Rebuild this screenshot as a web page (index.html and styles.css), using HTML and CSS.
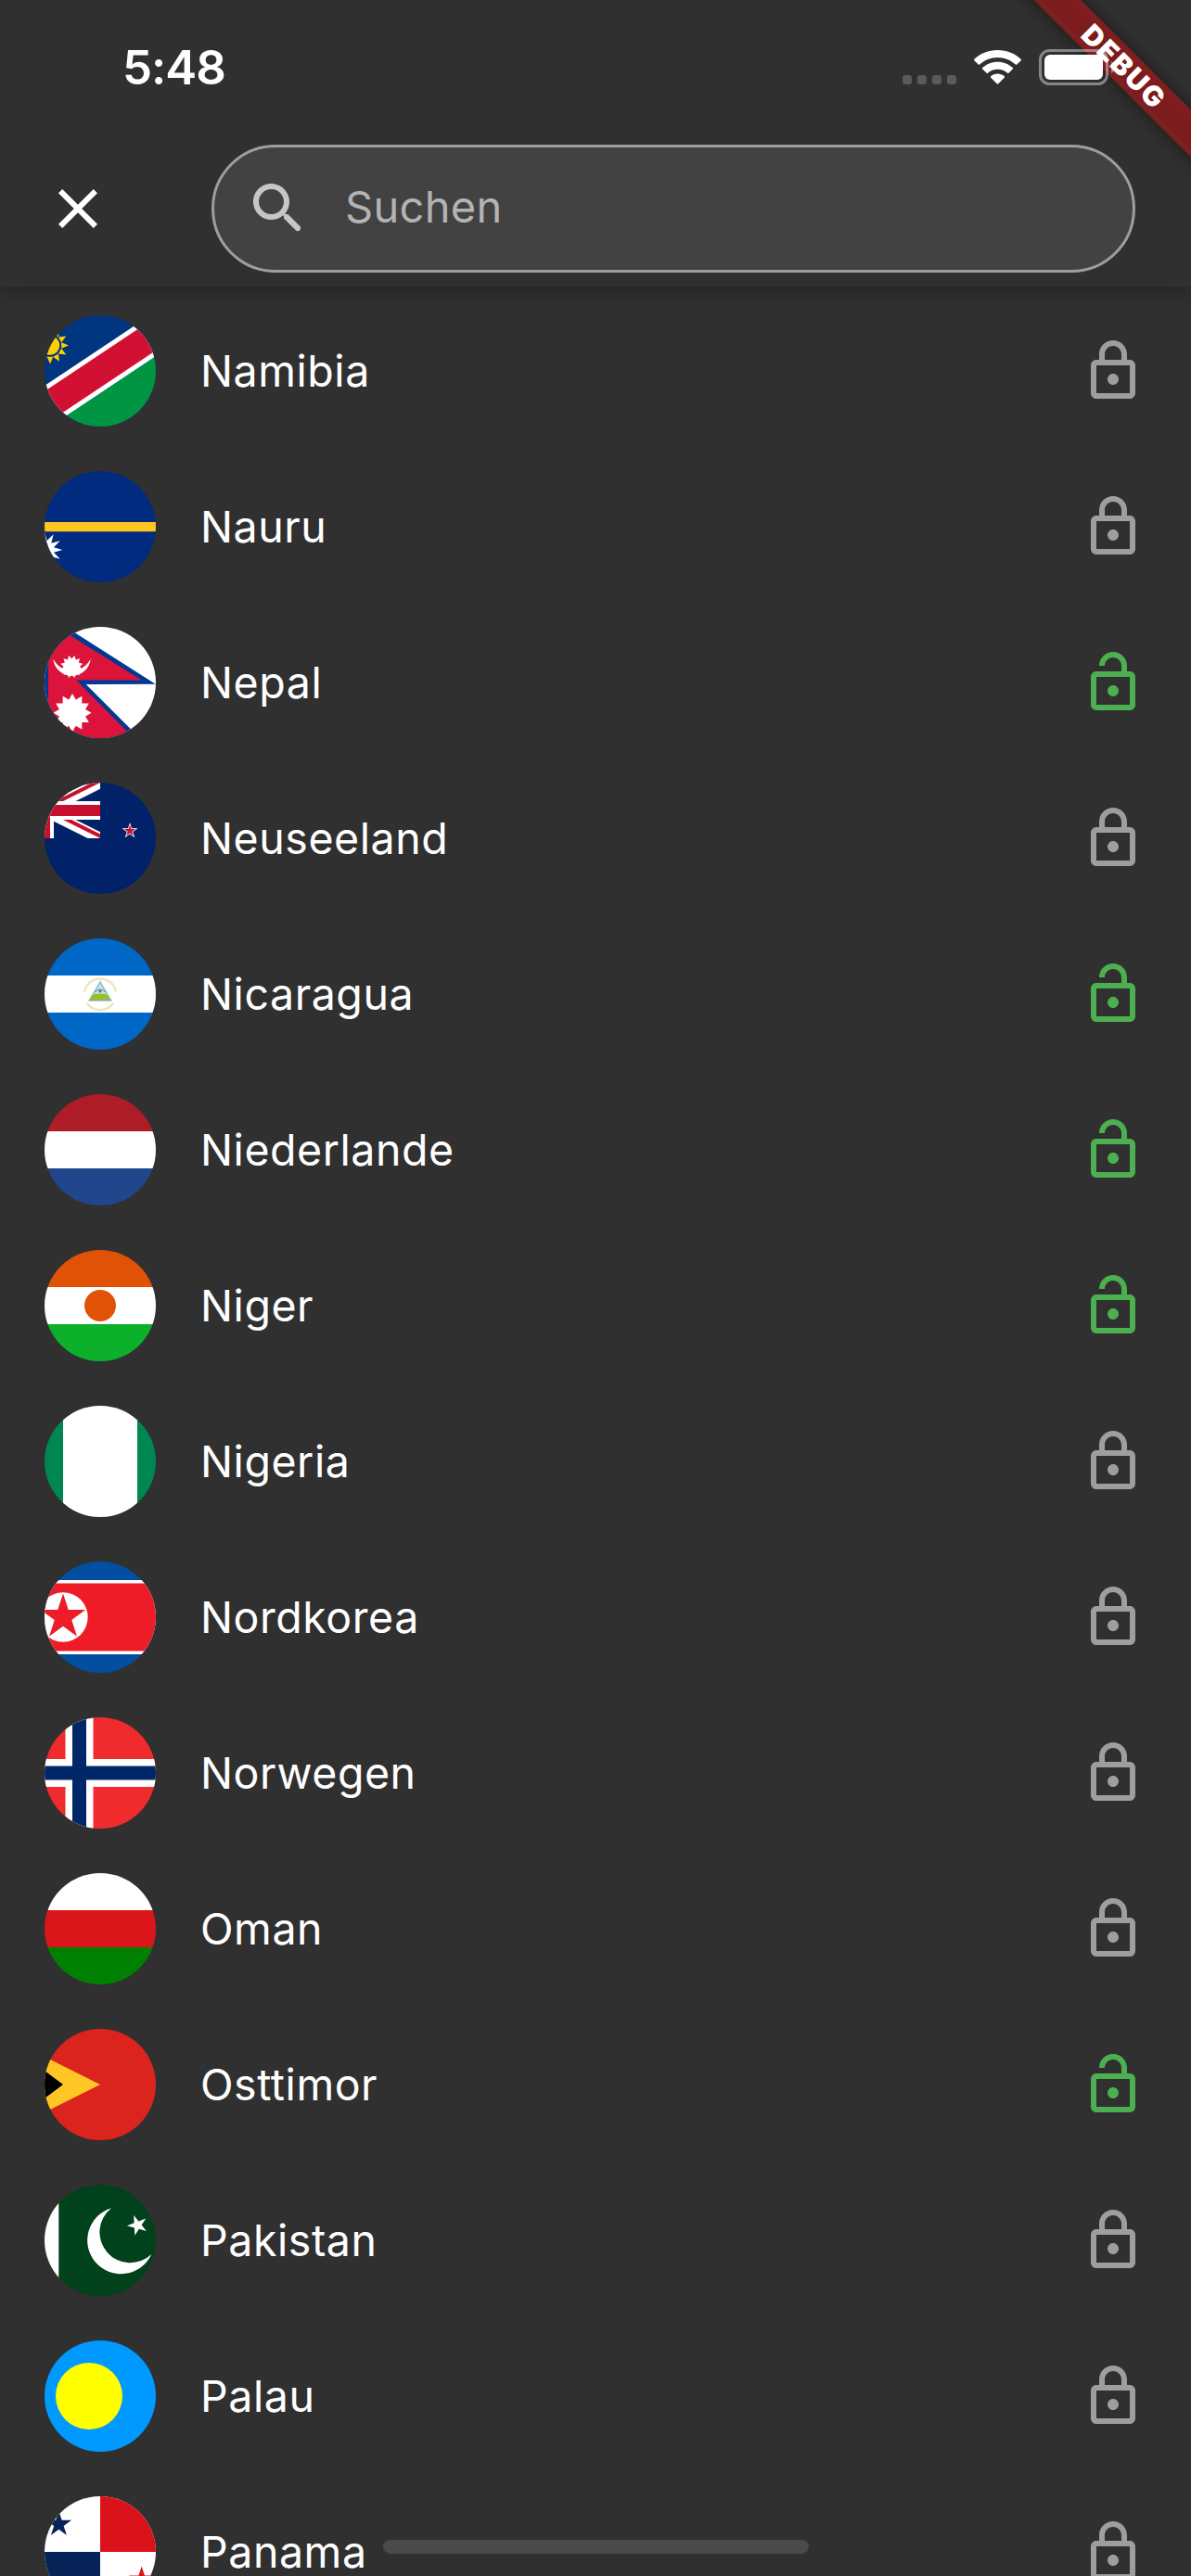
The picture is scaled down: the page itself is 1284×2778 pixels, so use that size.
FILE: index.html
```html
<!DOCTYPE html>
<html lang="de">
<head>
<meta charset="utf-8">
<title>Länder</title>
<link rel="stylesheet" href="styles.css">
</head>
<body>
<svg class="defs" aria-hidden="true">
  <defs>
    <symbol id="locked" viewBox="0 0 24 24"><path d="M18 8h-1V6c0-2.76-2.24-5-5-5S7 3.24 7 6v2H6c-1.1 0-2 .9-2 2v10c0 1.1.9 2 2 2h12c1.1 0 2-.9 2-2V10c0-1.1-.9-2-2-2zM9 6c0-1.66 1.34-3 3-3s3 1.34 3 3v2H9V6zm9 14H6V10h12v10zm-6-3c1.1 0 2-.9 2-2s-.9-2-2-2-2 .9-2 2 .9 2 2 2z"/></symbol>
    <symbol id="unlocked" viewBox="0 0 24 24"><path d="M18 8h-1V6c0-2.76-2.24-5-5-5S7 3.24 7 6h2c0-1.66 1.34-3 3-3s3 1.34 3 3v2H6c-1.1 0-2 .9-2 2v10c0 1.1.9 2 2 2h12c1.1 0 2-.9 2-2V10c0-1.1-.9-2-2-2zm0 12H6V10h12v10zm-6-3c1.1 0 2-.9 2-2s-.9-2-2-2-2 .9-2 2 .9 2 2 2z"/></symbol>
    <path id="star5" d="M0-10L2.245-3.09H9.511L3.633 1.18 5.878 8.09 0 3.82-5.878 8.09-3.633 1.18-9.511-3.09H-2.245Z"/>
    <path id="tri" d="M0-10L8.66 5H-8.66Z"/>
    <g id="star12"><use href="#tri"/><use href="#tri" transform="rotate(30)"/><use href="#tri" transform="rotate(60)"/><use href="#tri" transform="rotate(90)"/></g>
    <path id="ray" d="M12.2-3.3L20 0 12.2 3.3Z"/>
    <g id="rays3"><use href="#ray"/><use href="#ray" transform="rotate(30)"/><use href="#ray" transform="rotate(60)"/></g>
    <clipPath id="jack"><path d="M60 30h60v30zv30H60zH0V30zV0h60z"/></clipPath>
    <clipPath id="canton"><path d="M0 0h120v60H0z"/></clipPath>
  </defs>
</svg>

<div class="screen">
  <div class="debug"><span>DEBUG</span></div>

  <div class="status">
    <span class="time">5:48</span>
    <div class="indicators">
      <div class="signal"><i></i><i></i><i></i><i></i></div>
      <svg class="wifi" viewBox="0 0 51 37"><path d="M25.500 0C35.500 0 44.500 3.800 50.600 9.800Q51.300 10.600 50.500 11.400L46.200 15.600Q45.500 16.200 44.800 15.600C39.700 10.800 33 8 25.500 8S11.300 10.800 6.200 15.600Q5.500 16.200 4.800 15.600L.5 11.400Q-.3 10.600.4 9.800C6.500 3.800 15.500 0 25.500 0ZM25.500 12.700C32 12.700 37.500 15 41.800 19Q42.500 19.700 41.800 20.400L37.400 24.700Q36.800 25.300 36 24.700C33.200 22.200 29.600 20.700 25.500 20.700S17.800 22.200 15 24.700Q14.200 25.300 13.600 24.700L9.200 20.400Q8.500 19.700 9.200 19C13.500 15 19 12.700 25.500 12.700ZM25.500 25.600C28.300 25.600 30.700 26.500 32.700 28.100Q33.500 28.900 32.800 29.700L26.300 36.300Q25.500 37 24.700 36.300L18.200 29.700Q17.500 28.900 18.300 28.100C20.300 26.500 22.700 25.600 25.500 25.600Z"/></svg>
      <svg class="battery" viewBox="0 0 82 39"><rect x="1.500" y="1.500" width="72" height="36" rx="10"/><path class="nub" d="M78 13v13q4-2 4-6.500T78 13z"/><rect class="charge" x="6" y="6" width="63" height="27" rx="6"/></svg>
    </div>
  </div>

  <header class="bar">
    <svg class="icon close" viewBox="0 0 24 24"><path d="M19 6.410L17.590 5 12 10.590 6.410 5 5 6.410 10.590 12 5 17.590 6.410 19 12 13.410 17.590 19 19 17.590 13.410 12z"/></svg>
    <div class="search">
      <svg class="icon" viewBox="0 0 24 24"><path d="M15.500 14h-.79l-.28-.27c1.200-1.400 1.820-3.310 1.480-5.340-.47-2.780-2.790-5-5.590-5.340-4.230-.52-7.790 3.040-7.270 7.270.34 2.800 2.560 5.120 5.340 5.590 2.030.34 3.940-.28 5.340-1.480l.27.28v.79l4.250 4.250c.41.410 1.080.410 1.490 0 .41-.41.410-1.080 0-1.490L15.500 14zm-6 0C7.010 14 5 11.990 5 9.500S7.010 5 9.500 5 14 7.010 14 9.500 11.990 14 9.500 14z"/></svg>
      <span>Suchen</span>
    </div>
  </header>

  <ul class="list">
    <li>
      <svg class="flag" viewBox="0 0 120 120"><path fill="#003580" d="M0 0h120v120H0z"/><path fill="#009543" d="M0 124L120 44v76H0z"/><path fill="#fff" d="M0 76L120-4v48L0 124z"/><path fill="#d21034" d="M0 82L120 2v36L0 118z"/><g fill="#ffce00" transform="translate(6 32.500)"><circle r="10.300"/><use href="#rays3"/><use href="#rays3" transform="rotate(90)"/><use href="#rays3" transform="rotate(270)"/></g></svg>
      <span>Namibia</span><svg class="icon lock"><use href="#locked"/></svg>
    </li>
    <li>
      <svg class="flag" viewBox="0 0 120 120"><path fill="#002b7f" d="M0 0h120v120H0z"/><path fill="#ffc61e" d="M0 55h120v10.300H0z"/><path fill="#fff" transform="translate(0 85)" d="M0-19.300L2.670-9.950 9.650-16.700 7.280-7.280 16.700-9.650 9.950-2.670 19.300 0 9.950 2.670 16.700 9.650 7.280 7.280 9.650 16.700 2.670 9.950 0 19.300z"/></svg>
      <span>Nauru</span><svg class="icon lock"><use href="#locked"/></svg>
    </li>
    <li>
      <svg class="flag" viewBox="0 0 120 120"><path fill="#fff" d="M0 0h120v120H0z"/><path fill="#003893" d="M0-14.500L119.700 61.700 44.700 62 102.700 120H0z"/><path fill="#dc143c" d="M4-5.600L104.700 57.500H34.300L96.200 120H4z"/><g fill="#fff"><path d="M9.300 34.500A20.300 20.300 0 0 0 49.700 34.500 22.500 22.500 0 0 1 9.300 34.500z"/><use href="#star12" transform="translate(29.300 43) scale(1.230) rotate(15)"/><use href="#star12" transform="translate(30 92.700) scale(2.060)"/></g></svg>
      <span>Nepal</span><svg class="icon lock open"><use href="#unlocked"/></svg>
    </li>
    <li>
      <svg class="flag" viewBox="0 0 120 120"><path fill="#012169" d="M0 0h120v120H0z"/><g transform="translate(-60 0)" clip-path="url(#canton)"><path stroke="#fff" stroke-width="12" d="M0 0L120 60M120 0L0 60"/><path stroke="#c8102e" stroke-width="8" clip-path="url(#jack)" d="M0 0L120 60M120 0L0 60"/><path stroke="#fff" stroke-width="20" d="M60 0V60M0 30H120"/><path stroke="#c8102e" stroke-width="12" d="M60 0V60M0 30H120"/></g><use href="#star5" fill="#fff" transform="translate(92 52) scale(.9)"/><use href="#star5" fill="#c8102e" transform="translate(92 52) scale(.64)"/></svg>
      <span>Neuseeland</span><svg class="icon lock"><use href="#locked"/></svg>
    </li>
    <li>
      <svg class="flag" viewBox="0 0 120 120"><path fill="#0067c6" d="M0 0h120v120H0z"/><path fill="#fff" d="M0 40h120v40H0z"/><path fill="none" stroke="#e9dba0" stroke-width="2.400" stroke-dasharray="1.600 .6" d="M43 58A17.200 17.200 0 0 1 77 58M46 70A17.200 17.200 0 0 0 74 70"/><path fill="#8fc6c9" d="M60 45.500L72.800 67.300H47.200z"/><path fill="#b9ebf5" d="M60 49L67 61H53z"/><path fill="#9bbf24" d="M52.500 60.500q7.500-2 15 0L71 66H49z"/><path fill="none" stroke="#7a9fa0" stroke-width="1" d="M47.700 66.900H72.300"/><path fill="none" stroke="#4d8fb5" stroke-width="1" d="M54 58q6-6 12 0"/><circle cx="60" cy="57" r="1.500" fill="#d43b54"/></svg>
      <span>Nicaragua</span><svg class="icon lock open"><use href="#unlocked"/></svg>
    </li>
    <li>
      <svg class="flag" viewBox="0 0 120 120"><path fill="#ae1c28" d="M0 0h120v40H0z"/><path fill="#fff" d="M0 40h120v40H0z"/><path fill="#21468b" d="M0 80h120v40H0z"/></svg>
      <span>Niederlande</span><svg class="icon lock open"><use href="#unlocked"/></svg>
    </li>
    <li>
      <svg class="flag" viewBox="0 0 120 120"><path fill="#e05206" d="M0 0h120v40H0z"/><path fill="#fff" d="M0 40h120v40H0z"/><path fill="#0db02b" d="M0 80h120v40H0z"/><circle cx="60" cy="60" r="17" fill="#e05206"/></svg>
      <span>Niger</span><svg class="icon lock open"><use href="#unlocked"/></svg>
    </li>
    <li>
      <svg class="flag" viewBox="0 0 120 120"><path fill="#008751" d="M0 0h120v120H0z"/><path fill="#fff" d="M20 0h80v120H20z"/></svg>
      <span>Nigeria</span><svg class="icon lock"><use href="#locked"/></svg>
    </li>
    <li>
      <svg class="flag" viewBox="0 0 120 120"><path fill="#024fa2" d="M0 0h120v120H0z"/><path fill="#fff" d="M0 20h120v80H0z"/><path fill="#ed1c27" d="M0 23.500h120v73H0z"/><circle cx="20" cy="60" r="26.700" fill="#fff"/><use href="#star5" fill="#ed1c27" transform="translate(20 60) scale(2.550)"/></svg>
      <span>Nordkorea</span><svg class="icon lock"><use href="#locked"/></svg>
    </li>
    <li>
      <svg class="flag" viewBox="0 0 120 120"><path fill="#ef2b2d" d="M0 0h120v120H0z"/><path stroke="#fff" stroke-width="30" d="M37.500 0V120M0 60H120"/><path stroke="#002868" stroke-width="15" d="M37.500 0V120M0 60H120"/></svg>
      <span>Norwegen</span><svg class="icon lock"><use href="#locked"/></svg>
    </li>
    <li>
      <svg class="flag" viewBox="0 0 120 120"><path fill="#fff" d="M0 0h120v40H0z"/><path fill="#db161b" d="M0 40h120v40H0z"/><path fill="#008000" d="M0 80h120v40H0z"/></svg>
      <span>Oman</span><svg class="icon lock"><use href="#locked"/></svg>
    </li>
    <li>
      <svg class="flag" viewBox="0 0 120 120"><path fill="#dc241f" d="M0 0h120v120H0z"/><path fill="#ffc726" d="M-60 0L60 60-60 120z"/><path d="M-60 0L20 60-60 120z"/></svg>
      <span>Osttimor</span><svg class="icon lock open"><use href="#unlocked"/></svg>
    </li>
    <li>
      <svg class="flag" viewBox="0 0 120 120"><path fill="#01411c" d="M0 0h120v120H0z"/><path fill="#fff" d="M0 0h15.300v120H0z"/><path fill="#fff" d="M72 25.300A36.200 36.200 0 1 0 115.300 75 33 33 0 1 1 72 25.300z"/><use href="#star5" fill="#fff" transform="translate(100.300 43.700) scale(1.140) rotate(-21)"/></svg>
      <span>Pakistan</span><svg class="icon lock"><use href="#locked"/></svg>
    </li>
    <li>
      <svg class="flag" viewBox="0 0 120 120"><path fill="#09f" d="M0 0h120v120H0z"/><circle cx="48" cy="60" r="36" fill="#ff0"/></svg>
      <span>Palau</span><svg class="icon lock"><use href="#locked"/></svg>
    </li>
    <li>
      <svg class="flag" viewBox="0 0 120 120"><path fill="#fff" d="M0 0h120v120H0z"/><path fill="#da121a" d="M60 0h60v60H60z"/><path fill="#072357" d="M0 60h60v60H0z"/><use href="#star5" fill="#072357" transform="translate(15.400 30.300) scale(1.440)"/><use href="#star5" fill="#da121a" transform="translate(104.700 90) scale(1.440)"/></svg>
      <span>Panama</span><svg class="icon lock"><use href="#locked"/></svg>
    </li>
  </ul>
  <div class="home"></div>
</div>
</body>
</html>
```
FILE: styles.css
```css
body {
  margin: 0;
  background: #303030;
  color: #fff;
  font-family: Inter, "Liberation Sans", sans-serif;
}

.defs {
  position: absolute;
  width: 0;
  height: 0;
}

.screen {
  position: relative;
  display: flex;
  flex-direction: column;
  width: 1284px;
  height: 2778px;
  overflow: hidden;
}

.status {
  position: relative;
  z-index: 3;
  display: flex;
  flex: none;
  justify-content: space-between;
  box-sizing: border-box;
  height: 141px;
  padding: 53px 82px 0 132px;
}

.time {
  font-size: 51px;
  font-weight: 600;
  line-height: 40px;
  letter-spacing: -1px;
}

.indicators {
  display: flex;
  align-items: flex-start;
}

.signal {
  display: flex;
  gap: 6px;
  padding-top: 28px;
}

.signal i {
  width: 10px;
  height: 10px;
  border-radius: 3px;
  background: #5b5b5b;
}

.wifi {
  width: 51px;
  height: 37px;
  margin: 1px 19px 0;
  fill: #fff;
}

.battery {
  width: 82px;
  height: 39px;
  fill: none;
  stroke: rgba(255, 255, 255, 0.42);
  stroke-width: 3px;
}

.battery .nub {
  fill: rgba(255, 255, 255, 0.42);
  stroke: none;
}

.battery .charge {
  fill: #fff;
  stroke: none;
}

.bar {
  z-index: 1;
  display: flex;
  flex: none;
  align-items: center;
  justify-content: space-between;
  box-sizing: border-box;
  height: 168px;
  padding: 0 60px 0 48px;
  box-shadow: 0 3px 20px rgba(0, 0, 0, 0.3);
  clip-path: inset(0 0 -40px 0);
  background: #303030;
}

.icon {
  flex: none;
  width: 72px;
  height: 72px;
  fill: #fff;
}

.search {
  display: flex;
  align-items: center;
  gap: 36px;
  box-sizing: border-box;
  width: 996px;
  height: 138px;
  padding-left: 33px;
  border: 3px solid #9e9e9e;
  border-radius: 69px;
  background: #424242;
  color: #b3b3b3;
  font-size: 47px;
  letter-spacing: 0.3px;
}

.search span {
  padding-bottom: 5px;
}

.search .icon {
  fill: #c6c6c6;
}

.list {
  margin: 0;
  padding: 7px 0 0;
  list-style: none;
  font-size: 46.5px;
  line-height: 50px;
  letter-spacing: 0.55px;
}

.list li {
  display: flex;
  align-items: center;
  height: 168px;
  padding: 0 48px;
}

.list span {
  flex: 1;
  padding-left: 48px;
}

.flag {
  flex: none;
  width: 120px;
  height: 120px;
  border-radius: 50%;
}

.lock {
  fill: #9e9e9e;
}

.lock.open {
  fill: #4caf50;
}

.home {
  position: absolute;
  z-index: 2;
  left: 413px;
  bottom: 24px;
  width: 459px;
  height: 15px;
  border-radius: 8px;
  background: #4a4a4a;
}

/* Ribbon across the top right corner */
.debug {
  position: absolute;
  z-index: 2;
  top: 54px;
  right: -78px;
  display: flex;
  align-items: center;
  justify-content: center;
  width: 300px;
  height: 36px;
  font-size: 30px;
  font-weight: 900;
  letter-spacing: 2px;
  transform: rotate(45deg);
}

.debug::before,
.debug::after {
  content: "";
  position: absolute;
  z-index: -1;
  inset: 0;
}

.debug::before {
  background: rgba(0, 0, 0, 0.5);
  filter: blur(10px);
}

.debug::after {
  background: rgba(183, 28, 28, 0.627);
}
```
